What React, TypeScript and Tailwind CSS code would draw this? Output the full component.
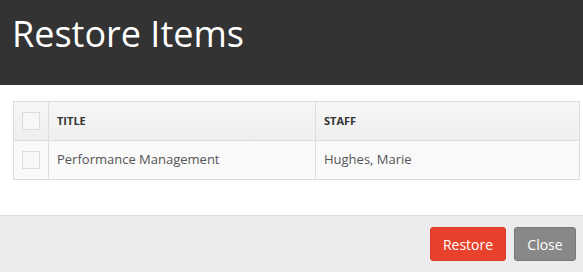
import React from 'react';

const rows = [{ title: 'Performance Management', staff: 'Hughes, Marie' }];

const Checkbox: React.FC = () => (
  <div className="w-[18px] h-[18px] border border-[#dcdcdc] bg-[#f7f7f7]" />
);

export default function App() {
  return (
    <div className="w-[583px] h-[272px] flex flex-col bg-white font-['Open_Sans',sans-serif] overflow-hidden">
      {/* Header */}
      <div className="h-[85px] bg-[#333333] px-[12px] pt-[16px]">
        <h1 className="text-[36px] text-white leading-none">Restore Items</h1>
      </div>

      {/* Body */}
      <div className="flex-1 px-[13px] pt-[16px]">
        <div className="w-[567px] border border-[#dddddd]">
          <div className="flex h-[39px] bg-gradient-to-b from-[#f7f7f7] to-[#eeeeee] border-b border-[#dddddd]">
            <div className="w-[35px] flex items-center justify-center border-r border-[#dddddd]">
              <Checkbox />
            </div>
            <div className="w-[267px] flex items-center px-[8px] border-r border-[#dddddd] text-[11px] font-bold text-[#333]">
              TITLE
            </div>
            <div className="flex-1 flex items-center px-[8px] text-[11px] font-bold text-[#333]">
              STAFF
            </div>
          </div>
          {rows.map((row, i) => (
            <div key={i} className="flex h-[38px] bg-[#f9f9f9]">
              <div className="w-[35px] flex items-center justify-center border-r border-[#dddddd]">
                <Checkbox />
              </div>
              <div className="w-[267px] flex items-center px-[8px] border-r border-[#dddddd] text-[13px] text-[#555]">
                {row.title}
              </div>
              <div className="flex-1 flex items-center px-[8px] text-[13px] text-[#555]">
                {row.staff}
              </div>
            </div>
          ))}
        </div>
      </div>

      {/* Footer */}
      <div className="h-[57px] bg-[#ececec] border-t border-[#dddddd] flex items-center justify-end gap-[8px] pr-[7px]">
        <button className="w-[76px] h-[34px] rounded-[3px] bg-[#e8412c] border border-[#d83a26] text-white text-[14px]">
          Restore
        </button>
        <button className="w-[62px] h-[34px] rounded-[3px] bg-[#888888] border border-[#7a7a7a] text-white text-[14px]">
          Close
        </button>
      </div>
    </div>
  );
}
